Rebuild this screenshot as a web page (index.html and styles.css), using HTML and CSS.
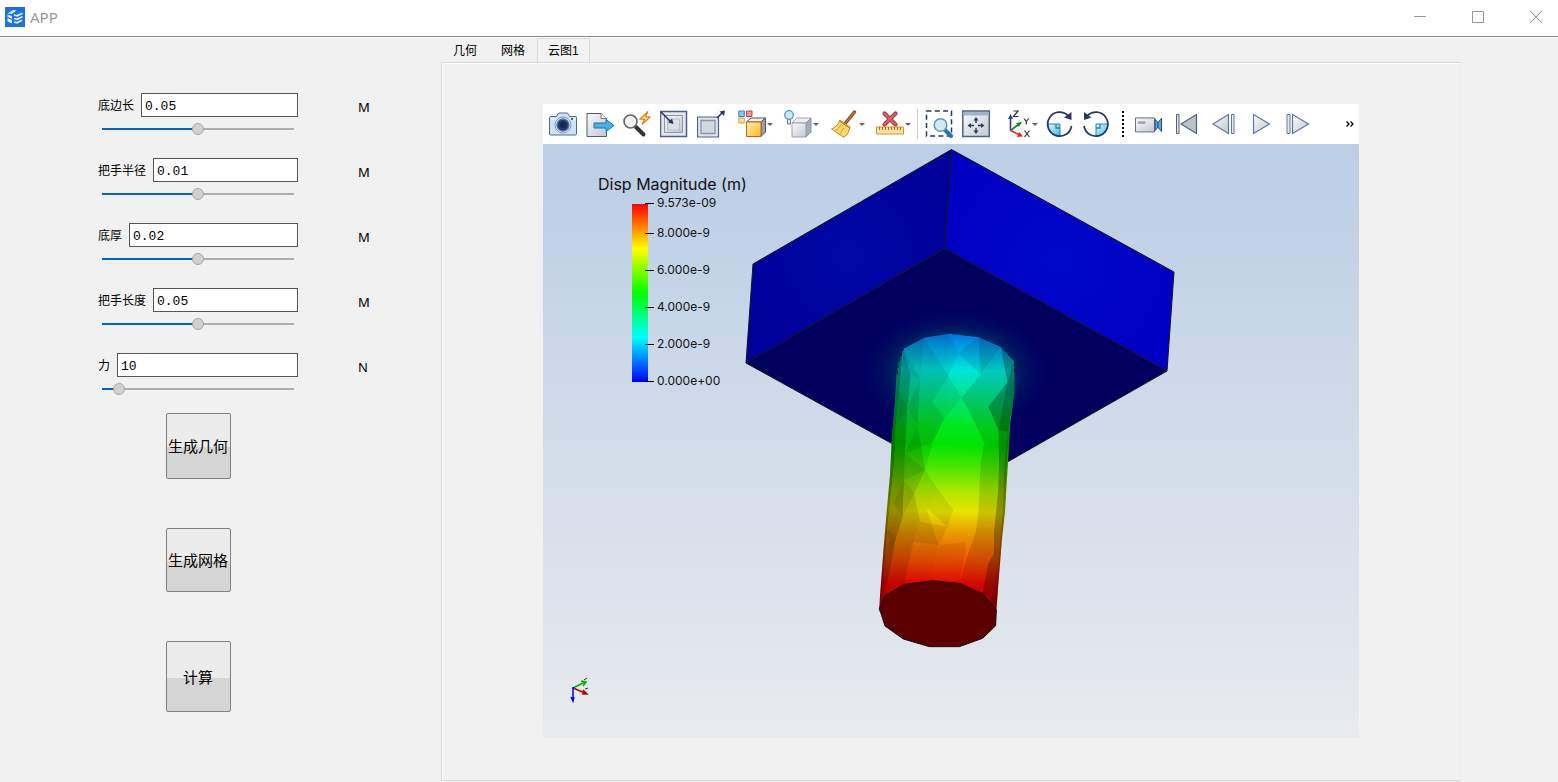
FILE: index.html
```html
<!DOCTYPE html>
<html lang="zh-CN">
<head>
<meta charset="utf-8">
<meta name="viewport" content="width=device-width, initial-scale=1">
<title>APP</title>
<link rel="stylesheet" href="styles.css">
</head>
<body>
<header class="titlebar">
  <svg class="logo" viewBox="0 0 20 20" aria-hidden="true"><rect width="20" height="20" fill="#1b6fe6"/><path d="M2.500 6.500L8 3l3.500.5L7 7zM2.500 7.500L7 9v7.500l-4.500-2z" fill="#d9eafb"/><path d="M9 8l3 .8 5.500-2.600M9 11.500l3 .8 5.500-2.600M9 15l3 .8 5-2.600" fill="none" stroke="#e4f1fd" stroke-width="1.800"/><path d="M2.500 10.500L7 12.500" stroke="#1b6fe6" stroke-width="1.200"/></svg>
  <span class="app-name">APP</span>
  <div class="window-controls">
    <button type="button" aria-label="最小化"><svg viewBox="0 0 14 14"><path d="M1 6.5h12"/></svg></button>
    <button type="button" aria-label="最大化"><svg viewBox="0 0 14 14"><path d="M1.500 1.500h11v11h-11z"/></svg></button>
    <button type="button" aria-label="关闭"><svg viewBox="0 0 14 14"><path d="M1 1l12 12M13 1L1 13"/></svg></button>
  </div>
</header>
<div class="workspace">
  <aside class="sidebar">
    <form class="params">
      <div class="field">
        <div class="field-row"><label for="p1">底边长</label><input class="value" id="p1" type="text" value="0.05"></div><span class="unit">M</span>
        <input class="slider half" type="range" min="0" max="100" value="50" aria-label="底边长">
      </div>
      <div class="field">
        <div class="field-row"><label for="p2">把手半径</label><input class="value" id="p2" type="text" value="0.01"></div><span class="unit">M</span>
        <input class="slider half" type="range" min="0" max="100" value="50" aria-label="把手半径">
      </div>
      <div class="field">
        <div class="field-row"><label for="p3">底厚</label><input class="value" id="p3" type="text" value="0.02"></div><span class="unit">M</span>
        <input class="slider half" type="range" min="0" max="100" value="50" aria-label="底厚">
      </div>
      <div class="field">
        <div class="field-row"><label for="p4">把手长度</label><input class="value" id="p4" type="text" value="0.05"></div><span class="unit">M</span>
        <input class="slider half" type="range" min="0" max="100" value="50" aria-label="把手长度">
      </div>
      <div class="field">
        <div class="field-row"><label for="p5">力</label><input class="value" id="p5" type="text" value="10"></div><span class="unit">N</span>
        <input class="slider low" type="range" min="0" max="100" value="6" aria-label="力">
      </div>
      <div class="actions">
        <button type="button" class="action">生成几何</button>
        <button type="button" class="action mesh">生成网格</button>
        <button type="button" class="action run">计算</button>
      </div>
    </form>
  </aside>
  <main class="content">
    <div class="tabs" role="tablist">
      <button type="button" role="tab" class="tab">几何</button>
      <button type="button" role="tab" class="tab">网格</button>
      <button type="button" role="tab" class="tab active" aria-selected="true">云图1</button>
    </div>
    <section class="panel">
      <div class="viewer">
        <div class="toolbar" role="toolbar">
          <svg class="defs" aria-hidden="true">
            <defs>
              <linearGradient id="steel" x1="0" y1="0" x2="1" y2="1"><stop offset="0" stop-color="#fafbfc"/><stop offset="1" stop-color="#c3c8d0"/></linearGradient>
              <linearGradient id="sky" x1="0" y1="0" x2="1" y2="1"><stop offset="0" stop-color="#e4f5fd"/><stop offset="1" stop-color="#45b5e6"/></linearGradient>
              <linearGradient id="gold" x1="0" y1="0" x2="1" y2="1"><stop offset="0" stop-color="#fff0b0"/><stop offset="1" stop-color="#f9b72c"/></linearGradient>
            </defs>
          </svg>
          <button type="button" class="tool" aria-label="截图"><svg viewBox="0 0 28 28"><path d="M1 6.500h6.500L9.500 3h9l2 3.500H27q.5 0 .5 1V24q0 1-1 1h-25q-1 0-1-1V7.500z" fill="#cfe1f4" stroke="#4a6a9a"/><path d="M1.500 9h25" stroke="#f3f8fd"/><circle cx="14" cy="15" r="8" fill="#eef3f8" stroke="#8197b5"/><circle cx="14" cy="15" r="6" fill="#203a6d" stroke="#5577aa" stroke-width="1.500"/><circle cx="14" cy="15" r="3" fill="#142751"/><circle cx="23" cy="9" r="1" fill="#203a6d"/></svg></button>
          <button type="button" class="tool" aria-label="导出"><svg viewBox="0 0 28 28"><path d="M1 3.500h14l5.500 5v18H1z" fill="url(#steel)" stroke="#555c66"/><path d="M15 3.500v5h5.500" fill="#fff" stroke="#777"/><path d="M8 13h12v-3.500l8 6-8 6V18H8z" fill="#45b5e8" stroke="#1b75a8"/></svg></button>
          <button type="button" class="tool" aria-label="快速查询"><svg viewBox="0 0 28 28"><path d="M13 17l7.500 7.500" stroke="#333" stroke-width="4" stroke-linecap="round"/><circle cx="7.500" cy="11.500" r="6.500" fill="#f0f2f4" stroke="#666" stroke-width="1.600"/><path d="M25 1.500l-8 7.500 4.500.5-2.500 5 8-7.500-4.500-.5z" fill="#ffe08a" stroke="#e07b20" stroke-width="1.200"/></svg></button>
          <button type="button" class="tool" aria-label="缩小"><svg viewBox="0 0 28 28"><path d="M.5 1.500h26v25H.5z" fill="#e4e7ec" stroke="#52607f" stroke-width="1.500"/><path d="M4.500 5.500h18v17h-18z" fill="url(#steel)" stroke="#8c94a5"/><path d="M7.500 9h12v11h-12z" fill="#dcdfe4" stroke="#b9bec8"/><path d="M1 2l10 10" stroke="#223765" stroke-width="1.600"/><path d="M13.500 14l-5.500-1.500 4-4z" fill="#223765"/></svg></button>
          <button type="button" class="tool" aria-label="放大"><svg viewBox="0 0 28 28"><path d="M.5 7h21v20H.5z" fill="#e0e4ea" stroke="#52607f" stroke-width="1.200"/><path d="M4 10.500h14v13H4z" fill="#d4d8df" stroke="#8c94a5" stroke-width="1.300"/><path d="M20 8l5-5" stroke="#223765" stroke-width="1.600"/><path d="M28 .5l-5.500 1 4.500 4.500z" fill="#223765"/></svg></button>
          <button type="button" class="tool drop" aria-label="选择"><svg viewBox="0 0 28 28"><path d="M.8 1h5.500v5.500H.8z" fill="#8bc8ec" stroke="#3182b8"/><path d="M8.500 1H14v5.500H8.500z" fill="#ef9292" stroke="#b94b50"/><path d="M.8 8h5.500v5H.8z" fill="#ffe3a2" stroke="#e69035"/><path d="M8.500 12l4.500-4h14.500L23 12z" fill="#eef0f3" stroke="#4b5363"/><path d="M23 12l4.500-4v14L23 26.500z" fill="#9ba0aa" stroke="#4b5363"/><path d="M8.500 12H23v14.500H8.500z" fill="url(#gold)" stroke="#b76a18"/></svg></button>
          <button type="button" class="tool drop" aria-label="显示"><svg viewBox="0 0 28 28"><path d="M8 13l5-5h14l-5 5z" fill="#edf0f3" stroke="#9ca3af"/><path d="M22 13l5-5v14l-5 5z" fill="#a5abb5" stroke="#8d949f"/><path d="M8 13h14v14H8z" fill="url(#steel)" stroke="#9ca3af"/><path d="M3.500 8h3v6h-3z" fill="#e3e6ea" stroke="#707a8c"/><circle cx="5" cy="5" r="4.300" fill="#c4e7fa" stroke="#4b9aca" stroke-width="1.300"/></svg></button>
          <button type="button" class="tool drop" aria-label="清除"><svg viewBox="0 0 28 28"><path d="M24.500 2l-9 11" stroke="#8e4b21" stroke-width="3.400" stroke-linecap="round"/><path d="M24.500 2l-9 11" stroke="#d98646" stroke-linecap="round"/><path d="M10 10l10 7q-.5 6-6 10.500L1.500 19Q8 16 10 10z" fill="#f9d869" stroke="#c28a25"/><path d="M9.500 11l10 7" stroke="#a8701f"/><path d="M6 21l5-6M10 24l4-6" stroke="#d39a35" fill="none"/></svg></button>
          <button type="button" class="tool drop" aria-label="删除标尺"><svg viewBox="0 0 28 28"><path d="M8.500 3.500l11 11M19.500 3.500l-11 11" stroke="#a33a41" stroke-width="4.200" stroke-linecap="round"/><path d="M8.500 3.500l11 11M19.500 3.500l-11 11" stroke="#d2666b" stroke-width="2" stroke-linecap="round"/><path d="M.5 17h27v7H.5z" fill="#fce0a0" stroke="#d49337"/><path d="M3.500 17v3M6.500 17v3M9.500 17v3M12.500 17v3M15.500 17v3M18.500 17v3M21.500 17v3M24.500 17v3" stroke="#a86e25"/></svg></button>
          <span class="separator"></span>
          <button type="button" class="tool" aria-label="框选缩放"><svg viewBox="0 0 28 28"><path d="M1.500 1h25v25h-25z" fill="none" stroke="#253863" stroke-width="1.500" stroke-dasharray="5 3.300"/><path d="M20 20l6 6" stroke="#2276b2" stroke-width="4" stroke-linecap="round"/><circle cx="15.500" cy="15" r="6.300" fill="#cdeafa" stroke="#6a93b3" stroke-width="1.500"/></svg></button>
          <button type="button" class="tool" aria-label="适应窗口"><svg viewBox="0 0 28 28"><path d="M.8 1h26.500v25.500H.8z" fill="url(#steel)" stroke="#4d5f83" stroke-width="1.500"/><path d="M1.500 2h25v3.500h-25z" fill="#9fb4d0"/><g stroke="#273b66" stroke-width="1.500"><path d="M14 9v4M14 18v4M8 15.500h4M16 15.500h4"/></g><path d="M14 7l2.500 3.500h-5zM14 24l2.500-3.500h-5zM5.500 15.500L9 13v5zM22.500 15.500L19 13v5z" fill="#273b66"/></svg></button>
          <button type="button" class="tool drop" aria-label="视图方向"><svg viewBox="0 0 28 28"><path d="M7.500 20.500V8" stroke="#28459a" stroke-width="1.600"/><path d="M7.500 4l2.600 5H5z" fill="#28459a"/><path d="M7.500 20.500l8-6" stroke="#168440" stroke-width="1.600"/><path d="M19 12l-3 5-3-4z" fill="#168440"/><path d="M7.500 20.500l8.500 4" stroke="#e22" stroke-width="1.600"/><path d="M20 26.500l-6 .5 2.500-5z" fill="#e22"/><path d="M10.500 1h4.500l-4.500 5.500h5M21 8.500l2.300 3 2.300-3M23.300 11.500V14.500M21.500 20.500l5 6.500M26.500 20.500l-5 6.500" fill="none" stroke="#333" stroke-width="1.200"/></svg></button>
          <button type="button" class="tool" aria-label="顺时针旋转"><svg viewBox="0 0 28 28"><path d="M3 14h12v12A12 12 0 0 1 3 14z" fill="url(#sky)" stroke="#2784b6"/><path d="M11 14v4h4" fill="none" stroke="#2784b6" stroke-width="1.300"/><path d="M23 5.500A12 12 0 1 0 26.500 16" fill="none" stroke="#243a68" stroke-width="1.700"/><path d="M26.500 2v8L19 7.500z" fill="#243a68"/></svg></button>
          <button type="button" class="tool" aria-label="逆时针旋转"><svg viewBox="0 0 28 28"><path d="M14 14h12a12 12 0 0 1-12 12z" fill="url(#sky)" stroke="#2784b6"/><path d="M18 14v4h-4" fill="none" stroke="#2784b6" stroke-width="1.300"/><path d="M5.500 5.500A12 12 0 1 1 2 16" fill="none" stroke="#243a68" stroke-width="1.700"/><path d="M2 2v8l7.500-2.500z" fill="#243a68"/></svg></button>
          <span class="grip"></span>
          <button type="button" class="tool" aria-label="录像"><svg viewBox="0 0 30 28"><path d="M.5 7.500H21v15H.5z" fill="url(#steel)" stroke="#5c6470"/><path d="M3 11h8v3H3z" fill="#a4a9b1"/><path d="M21.500 9l3 3.500 4-4.500v14l-4-4.500-3 3.500z" fill="#4aafd8" stroke="#243a68"/><path d="M24.500 12v6" stroke="#243a68"/></svg></button>
          <button type="button" class="tool" aria-label="首帧"><svg viewBox="0 0 28 28"><path d="M4.500 4.500H7v19H4.500z" fill="#dfe4ec" stroke="#52607f"/><path d="M24.500 4.500v19L9 14z" fill="#bcc1ca" stroke="#52607f" stroke-width="1.200"/></svg></button>
          <button type="button" class="tool" aria-label="上一帧"><svg viewBox="0 0 28 28"><path d="M19.500 4.500v19L4 14z" fill="url(#steel)" stroke="#6076a0" stroke-width="1.200"/><path d="M22.500 4.500H25v19h-2.500z" fill="#e6eaf0" stroke="#6076a0"/></svg></button>
          <button type="button" class="tool" aria-label="播放"><svg viewBox="0 0 28 28"><path d="M7.500 4.500v19l16-9.500z" fill="url(#steel)" stroke="#6076a0" stroke-width="1.200"/></svg></button>
          <button type="button" class="tool" aria-label="下一帧"><svg viewBox="0 0 28 28"><path d="M4 4.500h3v19H4z" fill="#e6eaf0" stroke="#6076a0"/><path d="M9.500 4.500v19L25.500 14z" fill="url(#steel)" stroke="#6076a0" stroke-width="1.200"/></svg></button>
          <button type="button" class="more" aria-label="更多"><svg viewBox="0 0 8 8"><path d="M.5 1.500L3 4 .5 6.500M4.500 1.500L7 4 4.500 6.500" fill="none" stroke="#000" stroke-width="1.300"/></svg></button>
        </div>
        <svg class="scene" viewBox="543 144 816 594" role="img" aria-label="Disp Magnitude (m)">
          <defs>
            <linearGradient id="scale" x1="0" y1="0" x2="0" y2="1"><stop offset="0" stop-color="#f00"/><stop offset=".25" stop-color="#ff0"/><stop offset=".5" stop-color="#0f0"/><stop offset=".75" stop-color="#0ff"/><stop offset="1" stop-color="#00f"/></linearGradient>
            <linearGradient id="body" gradientUnits="userSpaceOnUse" x1="260" y1="26" x2="240" y2="800"><stop offset="0" stop-color="#0073e4"/><stop offset=".06" stop-color="#00a5e2"/><stop offset=".14" stop-color="#00e6dc"/><stop offset=".24" stop-color="#00e588"/><stop offset=".35" stop-color="#00e826"/><stop offset=".43" stop-color="#00e400"/><stop offset=".52" stop-color="#4ee600"/><stop offset=".61" stop-color="#ade800"/><stop offset=".69" stop-color="#e8e400"/><stop offset=".77" stop-color="#ea9c00"/><stop offset=".87" stop-color="#f05800"/><stop offset=".97" stop-color="#f40800"/><stop offset="1" stop-color="#f00000"/></linearGradient>
            <radialGradient id="halo"><stop offset=".5" stop-color="#003c68"/><stop offset=".68" stop-color="#001c60" stop-opacity=".7"/><stop offset="1" stop-color="#00005f" stop-opacity="0"/></radialGradient>
            <radialGradient id="leftGlow"><stop offset="0" stop-color="#0008a4"/><stop offset="1" stop-color="#00009b"/></radialGradient>
            <radialGradient id="rightGlow"><stop offset="0" stop-color="#0008c8"/><stop offset="1" stop-color="#0000c2"/></radialGradient>
            <clipPath id="bodyClip"><path d="M82 120L100 72 163 38 238 26 325 37 392 66 434 112 433 200 420 300 414 412 405 560 396 640 384 790 379 860H28L28 840 40 680 50 560 60 450 65 350 75 230z"/></clipPath>
          </defs>
          <g stroke="#15151c" stroke-linejoin="round">
            <path d="M944.500 248.500L746 363l221 122 200-114z" fill="#00005f"/>
            <path d="M951.500 149.500L753 264l-7 99 198.500-114.500z" fill="url(#leftGlow)"/>
            <path d="M951.500 149.500L1174 272l-7 99-222.500-122.500z" fill="url(#rightGlow)"/>
          </g>
          <ellipse cx="955" cy="372" rx="100" ry="66" fill="url(#halo)"/>
          <g transform="translate(870 325) scale(.33333)">
            <g clip-path="url(#bodyClip)">
              <path d="M20 20h430v860H20z" fill="url(#body)"/>
              <path d="M20 60H100L88 200 78 300 72 420 60 535 52 610 45 700 30 860H20z" opacity=".5"/>
              <path d="M100 72L88 200 78 300 72 420 60 535 52 610 45 700 30 860 45 812 78 640 98 575 102 465 105 385 112 250 122 148z" opacity=".36"/>
              <path d="M100 72L163 38 150 163 143 300 165 435 133 505 150 590 130 650 103 778 45 812 78 640 98 575 102 465 105 385 112 250 122 148z" opacity=".2"/>
              <path d="M163 38L238 26 235 152 222 283 188 352 165 435 205 495 170 550 205 660 188 767 103 778 130 650 150 590 133 505 165 435 143 300 150 163z" opacity=".09"/>
              <path d="M325 37L392 66 412 172 355 245 385 315 387 410 384 500 372 620 372 685 355 715 337 805 268 775 290 700 318 620 325 560 332 415 343 355 313 290 275 218 332 148z" opacity=".13"/>
              <path d="M392 66L440 112V870H379L337 805 355 715 372 685 372 620 384 500 387 410 385 315 355 245 412 172z" opacity=".36"/>
              <g opacity=".08">
                <path d="M100 72L150 163 122 148zM150 163L188 228 143 300 112 250zM143 300L188 352 105 385zM105 385L165 435 102 465z"/>
                <path d="M163 38L235 152 188 228 150 163zM188 228L222 283 188 352 143 300zM102 465L133 505 98 575 70 535z"/>
                <path d="M232 605L207 660 130 650 150 590zM238 26L265 85 235 152zM325 37L392 66 332 148 265 85zM88 200L112 250 78 300zM52 610L78 640 60 690z"/>
                <path d="M170 550L205 495 250 555 232 605zM207 660L290 650 268 775 188 767zM235 152L275 218 222 283z"/>
              </g>
              <path d="M434 100V200L414 320 385 315 412 172zM414 320L405 560 384 790 379 860 360 840 384 740 398 560 404 410z" opacity=".18"/>
            </g>
            <path d="M28 850L45 812 103 778 188 767 268 775 337 805 379 855 377 902 338 940 268 965H178L100 942 45 903z" fill="#5a0000" stroke="#1a1010" stroke-width="3"/>
            <path d="M82 148L84 118 100 72M434 112V145" fill="none" stroke="#111" stroke-width="3" stroke-dasharray="12 6"/>
          </g>
          <path d="M632 204h16v178h-16z" fill="url(#scale)"/>
          <path d="M645 203.500h9M645 233.500h9M645 270.500h9M645 307.500h9M645 344.500h9M645 381.500h9" stroke="#000"/>
          <text class="legend-title" x="598" y="190">Disp Magnitude (m)</text>
          <g class="legend-label">
            <text x="657" y="207">9.573e-09</text><text x="657" y="237">8.000e-9</text><text x="657" y="274">6.000e-9</text><text x="657" y="311">4.000e-9</text><text x="657" y="348">2.000e-9</text><text x="657" y="385">0.000e+00</text>
          </g>
          <g fill="none" stroke-width="1.500">
            <path d="M573 688l12-6M581 681l5 1-3 4" stroke="#00b000"/><path d="M573 688l12 5M583 690l4 4h-5" stroke="#c00000"/><path d="M573 687v13M571 697l2 4 1-4" stroke="#0000f0"/><path d="M584 680l3-2M585 689l3-1" stroke="#333" stroke-width="1"/>
          </g>
        </svg>
      </div>
    </section>
  </main>
</div>
</body>
</html>
```
FILE: styles.css
```css
* { box-sizing: border-box; }
body {
  margin: 0;
  min-height: 100vh;
  display: flex;
  flex-direction: column;
  background: #f1f1f1;
  color: #000;
  font: 12px/20px "Noto Sans", "Noto Sans CJK SC", sans-serif;
}
button { margin: 0; padding: 0; border: 0; background: none; color: inherit; font: inherit; }
svg { display: block; }

.titlebar {
  display: flex;
  align-items: center;
  height: 37px;
  padding: 0 1px 3px 5px;
  background: #fff;
  border-bottom: 1px solid #808693;
}
.logo { width: 20px; height: 20px; }
.app-name { margin-left: 5px; color: #999; font-size: 15px; }
.window-controls { display: flex; gap: 16px; margin-left: auto; }
.window-controls button { display: grid; place-items: center; width: 42px; height: 32px; }
.window-controls svg { width: 14px; height: 14px; fill: none; stroke: #999; }

.workspace { flex: 1; display: flex; border-top: 1px solid #fff; }
.sidebar { flex: none; width: 441px; padding: 55px 0 0 98px; }
.params { display: flex; flex-direction: column; gap: 23px; }
.field { display: grid; grid-template-columns: 200px auto; column-gap: 60px; justify-content: start; }
.field-row { display: flex; gap: 7px; height: 24px; align-items: center; }
.field-row label { flex: none; font-family: "Noto Sans CJK SC", sans-serif; }
.value {
  flex: 1;
  min-width: 0;
  height: 24px;
  padding: 2px 3px 0;
  border: 1px solid #555;
  background: #fff;
  color: #000;
  font: 13px/20px "Liberation Mono", monospace;
}
.unit { font-size: 13px; line-height: 28px; }
.slider {
  appearance: none;
  width: 192px;
  height: 12px;
  margin: 2px 0 0 4px;
  background: none;
}
.slider::-webkit-slider-runnable-track { height: 2px; background: #adadad; }
.slider.half::-webkit-slider-runnable-track { background: linear-gradient(90deg, #0067c0 50%, #adadad 50%); }
.slider.low::-webkit-slider-runnable-track { background: linear-gradient(90deg, #0067c0 9%, #adadad 9%); }
.slider::-webkit-slider-thumb {
  appearance: none;
  width: 12px;
  height: 12px;
  margin-top: -5px;
  border: 1px solid #a6a6a6;
  border-radius: 50%;
  background: #d1d1d1;
}
.actions {
  display: flex;
  flex-direction: column;
  align-items: center;
  gap: 49px;
  width: 200px;
  margin-top: -5px;
}
.action {
  width: 65px;
  height: 66px;
  border: 1px solid #808080;
  border-radius: 2px;
  background: linear-gradient(#ececec 52%, #d5d5d5 52%);
  font: 15px/20px "Noto Sans CJK SC", sans-serif;
  white-space: nowrap;
}
.action.mesh { height: 64px; }
.action.run { height: 71px; }

.content { flex: 1; min-width: 0; display: flex; flex-direction: column; margin: 0 97px 1px 0; }
.tabs { display: flex; height: 24px; }
.tab { padding: 2px 12px 0; font-family: "Liberation Sans", "Noto Sans CJK SC", sans-serif; line-height: 22px; }
.tab.active { padding: 1px 10px 0; border: 1px solid #d9d9d9; border-bottom: 0; background: #f3f3f3; }
.panel {
  flex: 1;
  display: flex;
  padding: 41px 101px 42px;
  border: 1px solid #d9d9d9;
  border-right-color: #eee;
  box-shadow: inset 1px 1px #fff;
}
.viewer { flex: 1; min-width: 0; display: flex; flex-direction: column; }
.toolbar { display: flex; align-items: center; height: 40px; padding: 0 4px 0 1px; background: #fff; overflow: hidden; }
.defs { position: absolute; width: 0; height: 0; }
.tool { flex: none; display: grid; place-items: center; width: 37px; height: 40px; }
.tool svg { width: 28px; height: 28px; fill: none; }
.drop { width: 46px; display: flex; align-items: center; padding-left: 9px; }
.drop::after { content: ""; border: 3px solid transparent; border-top-color: #666; border-bottom: 0; margin-left: 1px; }
.separator { flex: none; width: 1px; height: 30px; margin: 0 2px 0 4px; background: #d0d0d0; }
.grip { flex: none; width: 2px; height: 26px; margin: 0 6px 0 8px; background: repeating-linear-gradient(#000 0 2px, transparent 2px 4px); }
.more { display: grid; place-items: center; width: 10px; height: 20px; margin-left: auto; }
.more svg { width: 8px; height: 8px; }
.scene { flex: 1; min-height: 0; width: 100%; background: linear-gradient(#bacee5, #e8eaee); }
.legend-title { font: 16px Inter, sans-serif; fill: #111; }
.legend-label { font: 12px Inter, sans-serif; fill: #111; }
```
